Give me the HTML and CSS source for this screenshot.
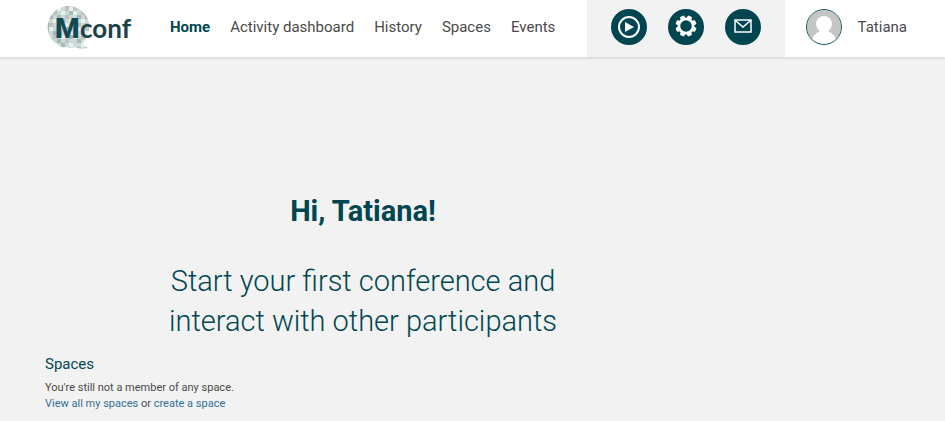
FILE: index.html
```
<!DOCTYPE html>
<html lang="en">
<head>
  <meta charset="UTF-8" />
  <meta name="viewport" content="width=device-width, initial-scale=1.0"/>
  <title>Mconf</title>
  <link rel="stylesheet" href="styles.css">
</head>
<body>

  <header class="navbar">
    <a class="logo" href="#" aria-label="Mconf">
      <svg width="88" height="48" viewBox="0 0 88 48">
        <defs>
          <pattern id="mosaic" width="28" height="24" patternUnits="userSpaceOnUse">
            <rect width="28" height="24" fill="#ccd9d8"/>
            <path fill="#a3b8b7" d="M0 0h4v4H0zM8 4h4v4H8zM20 0h4v4h-4zM4 12h4v4H4zM16 16h4v4h-4zM24 8h4v4h-4zM0 20h4v4H0zM12 12h4v4h-4z"/>
            <path fill="#e9efee" d="M4 0h4v4H4zM12 4h4v4h-4zM0 8h4v4H0zM8 16h4v4H8zM20 20h4v4h-4zM24 4h4v4h-4zM16 8h4v4h-4zM24 16h4v4h-4z"/>
            <path fill="#bcc3bc" d="M12 0h4v4h-4zM0 4h4v4H0zM8 8h4v4H8zM20 12h4v4h-4zM4 20h4v4H4zM12 20h4v4h-4zM20 4h4v4h-4z"/>
          </pattern>
        </defs>
        <path fill="url(#mosaic)" d="M23 3a21 21 0 1 0 7 41q5 3 13 1q-4-2-5-6A21 21 0 0 0 23 3z"/>
        <text class="logo-m" x="10" y="35">M</text>
        <text class="logo-conf" x="35" y="35">conf</text>
      </svg>
    </a>

    <nav class="menu">
      <a class="active" href="#">Home</a>
      <a href="#">Activity dashboard</a>
      <a href="#">History</a>
      <a href="#">Spaces</a>
      <a href="#">Events</a>
    </nav>

    <div class="actions">
      <button type="button" aria-label="Start conference">
        <svg width="36" height="36" viewBox="0 0 36 36">
          <circle cx="18" cy="18" r="10" fill="none" stroke="#fff" stroke-width="2"/>
          <path d="M14 13l9 5-9 5z" fill="#fff"/>
        </svg>
      </button>
      <button type="button" aria-label="Settings">
        <svg width="36" height="36" viewBox="0 0 36 36">
          <g transform="translate(18 17)">
            <circle r="7" fill="none" stroke="#fff" stroke-width="2.500"/>
            <g fill="#fff">
              <path id="tooth" d="M-2-10.500h4l1 4h-6z" transform="rotate(22.500)"/>
              <use href="#tooth" transform="rotate(45)"/>
              <use href="#tooth" transform="rotate(90)"/>
              <use href="#tooth" transform="rotate(135)"/>
              <use href="#tooth" transform="rotate(180)"/>
              <use href="#tooth" transform="rotate(225)"/>
              <use href="#tooth" transform="rotate(270)"/>
              <use href="#tooth" transform="rotate(315)"/>
            </g>
          </g>
        </svg>
      </button>
      <button type="button" aria-label="Messages">
        <svg width="36" height="36" viewBox="0 0 36 36" fill="none" stroke="#fff" stroke-width="1.500">
          <path d="M10 11h16v12H10zM11 12l7 6 7-6"/>
        </svg>
      </button>
    </div>

    <a class="user" href="#">
      <svg width="36" height="36" viewBox="0 0 36 36">
        <defs>
          <clipPath id="round"><circle cx="18" cy="18" r="17"/></clipPath>
        </defs>
        <circle cx="18" cy="18" r="17" fill="#c5c6c6"/>
        <g clip-path="url(#round)" fill="#fff">
          <circle cx="18" cy="15" r="8"/>
          <path d="M5 36q1-11 9-14h8q8 3 9 14z"/>
        </g>
        <circle cx="18" cy="18" r="17.500" fill="none" stroke="#1f5c66"/>
      </svg>
      <span>Tatiana</span>
    </a>
  </header>

  <main class="content">
    <section class="welcome">
      <h1>Hi, Tatiana!</h1>
      <p>Start your first conference and interact with other participants</p>
    </section>

    <section class="spaces">
      <h2>Spaces</h2>
      <p>You're still not a member of any space.</p>
      <p><a href="#">View all my spaces</a> or <a href="#">create a space</a></p>
    </section>
  </main>

</body>
</html>
```
FILE: styles.css
```
body {
  margin: 0;
  font-family: Roboto, "Liberation Sans", sans-serif;
  background: #f2f2f2;
  color: #4a4a4a;
}
a {
  color: #337099;
  text-decoration: none;
}
.navbar {
  display: flex;
  align-items: center;
  height: 57px;
  padding-left: 45px;
  background: white;
  box-shadow: 0 1px 3px rgba(0,0,0,0.15);
}
.logo, .menu, .user {
  padding-bottom: 3px;
}
.logo svg {
  display: block;
}
.logo-m {
  font: 900 28px Roboto, sans-serif;
  fill: #134a52;
}
.logo-conf {
  font: bold 26px Lato, sans-serif;
  fill: #1c4149;
}
.menu {
  display: flex;
  flex: 1;
  gap: 20px;
  padding-left: 37px;
  white-space: nowrap;
}
.menu a, .user {
  font-size: 15px;
  line-height: 20px;
  color: #4a4a4a;
}
.menu .active {
  font-weight: bold;
  color: #004650;
}
.actions {
  display: flex;
  align-items: flex-start;
  gap: 21px;
  height: 48px;
  padding: 9px 24px 0;
  background: #f2f2f2;
}
.actions button {
  width: 36px;
  height: 36px;
  padding: 0;
  border: none;
  border-radius: 50%;
  background: #004650;
  cursor: pointer;
}
.actions svg {
  display: block;
}
.user {
  display: flex;
  align-items: center;
  gap: 16px;
  padding-left: 21px;
  padding-right: 38px;
}
.content {
  padding: 134px 45px 9px;
}
.welcome {
  max-width: 636px;
  text-align: center;
  color: #004650;
}
.welcome h1 {
  margin: 0 0 30px;
  font-size: 29px;
  line-height: 40px;
}
.welcome p {
  max-width: 420px;
  margin: 0 auto;
  font-size: 29px;
  font-weight: 300;
  line-height: 40px;
}
.spaces {
  margin-top: 13px;
  font-size: 11px;
  line-height: 16px;
}
.spaces h2 {
  margin: 0 0 6px;
  font-size: 15px;
  font-weight: normal;
  line-height: 20px;
  color: #004650;
}
.spaces p {
  margin: 0;
}
```
